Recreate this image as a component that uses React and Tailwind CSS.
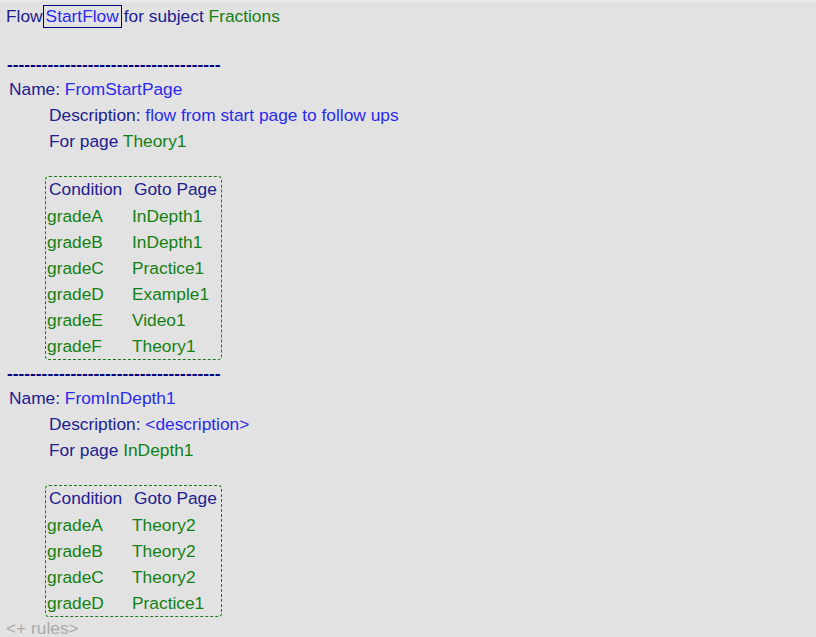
import React from "react";

const flows = [
  {
    name: "FromStartPage",
    description: "flow from start page to follow ups",
    page: "Theory1",
    rules: [
      ["gradeA", "InDepth1"],
      ["gradeB", "InDepth1"],
      ["gradeC", "Practice1"],
      ["gradeD", "Example1"],
      ["gradeE", "Video1"],
      ["gradeF", "Theory1"],
    ],
  },
  {
    name: "FromInDepth1",
    description: "<description>",
    page: "InDepth1",
    rules: [
      ["gradeA", "Theory2"],
      ["gradeB", "Theory2"],
      ["gradeC", "Theory2"],
      ["gradeD", "Practice1"],
    ],
  },
];

const DASHES = "-".repeat(37);

function FlowBlock({ flow }) {
  return (
    <div>
      <div className="h-[24px] leading-[24px] pl-[7px] font-bold text-[#000080]">{DASHES}</div>
      <div className="h-[26px] leading-[26px] pl-[9px]">
        <span className="text-[#202090]">Name: </span>
        <span className="text-[#2a2aee]">{flow.name}</span>
      </div>
      <div className="pl-[49px]">
        <div className="h-[26px] leading-[26px]">
          <span className="text-[#202090]">Description: </span>
          <span className="text-[#2a2aee]">{flow.description}</span>
        </div>
        <div className="h-[26px] leading-[26px]">
          <span className="text-[#202090]">For page </span>
          <span className="text-[#138013]">{flow.page}</span>
        </div>
      </div>
      <div className="pl-[45px] pt-[22px] pb-[1px]">
        <div className="w-[177px] rounded-[4px] border border-dashed border-[#1a7a1a] pl-[1px]">
          <div className="grid grid-cols-[85px_1fr]">
            <div className="h-[26px] leading-[24px] pl-[2px] text-[#202090]">Condition</div>
            <div className="h-[26px] leading-[24px] pl-[2px] text-[#202090]">Goto Page</div>
            {flow.rules.map(([c, p]) => (
              <React.Fragment key={c}>
                <div className="h-[26px] leading-[26px] text-[#138013]">{c}</div>
                <div className="h-[26px] leading-[26px] text-[#138013]">{p}</div>
              </React.Fragment>
            ))}
          </div>
        </div>
      </div>
    </div>
  );
}

export default function App() {
  return (
    <div className="min-h-[637px] bg-[#e2e2e2] font-['Liberation_Sans',Arial,sans-serif] text-[17.33px] border-t-2 border-[#e9e9e9]">
      <div className="h-[28px] leading-[28px] pl-[6px] whitespace-nowrap">
        <span className="text-[#202090]">Flow</span>
        <span className="border border-[#000080] px-[2px] pb-[1px] text-[#2a2aee]">StartFlow</span>
        <span className="ml-[2px] text-[#202090]">for subject </span>
        <span className="text-[#138013]">Fractions</span>
      </div>
      <div className="h-[22px]" />
      {flows.map((f) => (
        <FlowBlock key={f.name} flow={f} />
      ))}
      <div className="pl-[6px] h-[20px] leading-[20px] text-[#aaaaaa]">{"<+ rules>"}</div>
    </div>
  );
}
